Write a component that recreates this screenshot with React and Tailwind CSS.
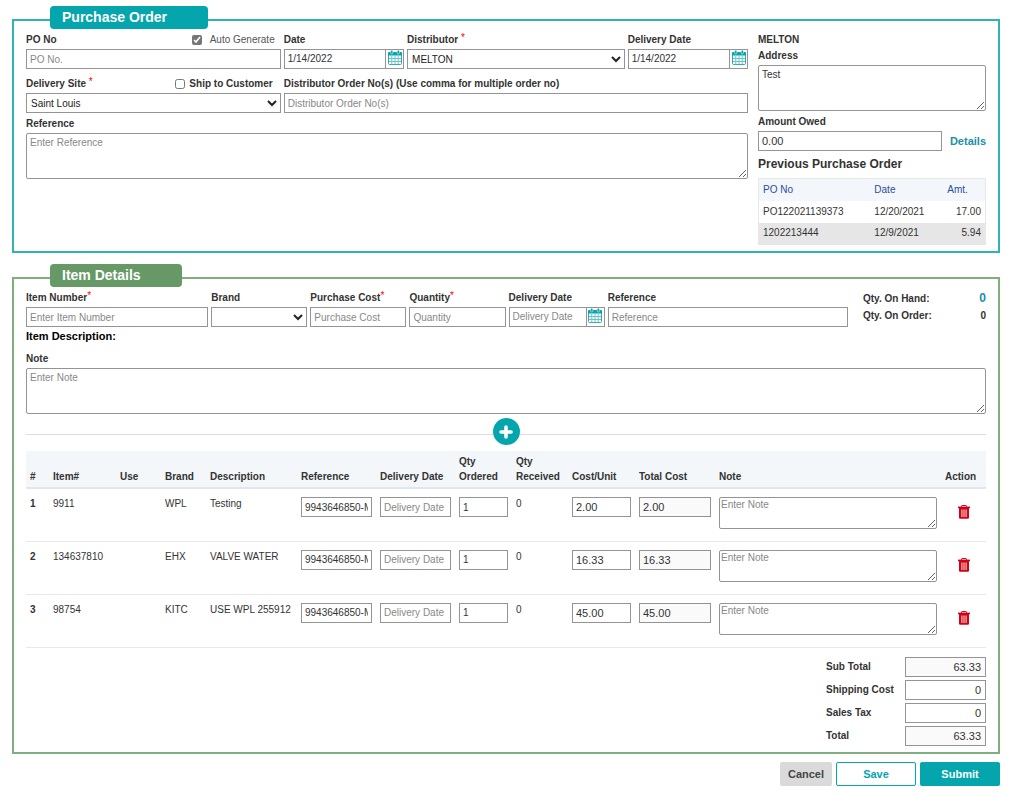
import { useState } from "react";

const previousOrders = [
    { po: "PO122021139373", date: "12/20/2021", amount: "17.00" },
    { po: "1202213444", date: "12/9/2021", amount: "5.94" },
];

const items = [
    { item: "9911", brand: "WPL", description: "Testing", cost: "2.00" },
    { item: "134637810", brand: "EHX", description: "VALVE WATER", cost: "16.33" },
    { item: "98754", brand: "KITC", description: "USE WPL 255912", cost: "45.00" },
];

const control =
    "block h-5 w-full min-w-0 border border-[#949494] px-[3px] text-[#333] placeholder:text-[#888] read-only:bg-[#fafafa]";
const selectControl = "block h-5 w-full min-w-0 border border-[#949494] text-[#222]";
const area =
    "block w-full rounded-xs border border-[#949494] text-[10px] leading-[14px] text-[#333] placeholder:text-[#888]";

function Star() {
    return <span className="align-top text-[10px] font-normal leading-3 text-[#ff0000]">*</span>;
}

function Label({ htmlFor, children }) {
    return (
        <label htmlFor={htmlFor} className="mb-px block h-4 whitespace-nowrap font-bold leading-4">
            {children}
        </label>
    );
}

function CalendarIcon() {
    return (
        <svg viewBox="0 0 14 15" className="h-[15px] w-3.5" aria-hidden="true">
            <rect x="0.5" y="2.5" width="13" height="12" rx="1" fill="#fff" stroke="#2aacb2" />
            <path d="M0 2.5Q0 2 1 2h12Q14 2 14 2.500V5.500H0z" fill="#04a5ac" />
            <path d="M3.800 5.500v9M7 5.500v9M10.200 5.500v9M1 8.500h12M1 11.500h12" stroke="#5cc0c5" strokeWidth="0.9" />
            <rect x="2.600" y="0.300" width="2.200" height="3.700" rx="1" fill="#04a5ac" stroke="#fff" strokeWidth="0.500" />
            <rect x="9.200" y="0.300" width="2.200" height="3.700" rx="1" fill="#04a5ac" stroke="#fff" strokeWidth="0.500" />
        </svg>
    );
}

function TrashIcon() {
    return (
        <svg viewBox="0 0 12 14" className="h-3.5 w-3" aria-hidden="true">
            <path d="M3.500 2V1.200Q3.500 0.500 4.200 0.500H7.800Q8.500 0.500 8.500 1.200V2" fill="none" stroke="#d0021b" />
            <path d="M0 1.600h12v1.600H0z" fill="#d0021b" />
            <path d="M1 3h10V12.500Q11 13.700 9.800 13.700H2.200Q1 13.700 1 12.500z" fill="#d0021b" />
            <path d="M3.900 4.500v7.500M6 4.500v7.500M8.100 4.500v7.500" stroke="#fbd3c0" strokeWidth="1.100" />
        </svg>
    );
}

function DateField({ id, label, value, placeholder }) {
    return (
        <div className="min-w-0">
            <Label htmlFor={id}>{label}</Label>
            <div className="flex h-5 border border-[#949494]">
                <input
                    id={id}
                    type="text"
                    defaultValue={value}
                    placeholder={placeholder}
                    className="min-w-0 flex-1 px-[3px] text-[#333] placeholder:text-[#888]"
                />
                <button
                    type="button"
                    aria-label="Open calendar"
                    className="flex w-[18px] justify-center border-l border-[#949494]"
                >
                    <CalendarIcon />
                </button>
            </div>
        </div>
    );
}

function PurchaseOrder() {
    return (
        <section className="border-2 border-[#2fb3b8] px-3 pb-1.5">
            <h2 className="-mt-[15px] ml-6 h-[23px] w-[158px] rounded bg-[#04a5ac] px-3 text-sm font-bold leading-[23px] text-white">
                Purchase Order
            </h2>
            <div className="mt-[3px] flex gap-2.5">
                <div className="min-w-0 flex-1">
                    <div className="grid grid-cols-[254fr_120fr_217fr_120fr] gap-x-[3px] gap-y-[7px]">
                        <div className="min-w-0">
                            <div className="flex justify-between pr-1.5">
                                <Label htmlFor="po-no">PO No</Label>
                                <label className="flex h-4 items-center gap-2 text-[#555]">
                                    <input type="checkbox" defaultChecked className="size-2.5 accent-[#767676]" />
                                    Auto Generate
                                </label>
                            </div>
                            <input id="po-no" type="text" placeholder="PO No." className={control} />
                        </div>
                        <DateField id="po-date" label="Date" value="1/14/2022" />
                        <div className="min-w-0">
                            <Label htmlFor="distributor">
                                Distributor <Star />
                            </Label>
                            <select id="distributor" className={selectControl}>
                                <option>MELTON</option>
                            </select>
                        </div>
                        <DateField id="po-delivery" label="Delivery Date" value="1/14/2022" />
                        <div className="min-w-0">
                            <div className="flex justify-between pr-2">
                                <Label htmlFor="site">
                                    Delivery Site <Star />
                                </Label>
                                <label className="flex h-4 items-center gap-1 font-bold">
                                    <input type="checkbox" className="size-2.5" />
                                    Ship to Customer
                                </label>
                            </div>
                            <select id="site" className={selectControl}>
                                <option>Saint Louis</option>
                            </select>
                        </div>
                        <div className="col-span-3 min-w-0">
                            <Label htmlFor="order-nos">
                                Distributor Order No(s) (Use comma for multiple order no)
                            </Label>
                            <input id="order-nos" type="text" placeholder="Distributor Order No(s)" className={control} />
                        </div>
                    </div>
                    <div className="mt-[3px]">
                        <Label htmlFor="po-reference">Reference</Label>
                        <textarea
                            id="po-reference"
                            placeholder="Enter Reference"
                            className={`${area} h-[46px] px-[3px] py-0.5`}
                        />
                    </div>
                </div>

                <div className="w-[228px] shrink-0">
                    <p className="font-bold leading-4">MELTON</p>
                    <Label htmlFor="address">Address</Label>
                    <textarea id="address" defaultValue="Test" className={`${area} h-[46px] px-[3px] py-0.5`} />
                    <div className="mt-[3px]">
                        <Label htmlFor="owed">Amount Owed</Label>
                        <div className="flex items-center gap-2">
                            <input id="owed" type="text" defaultValue="0.00" className={`${control} text-[11px]`} />
                            <a href="#details" className="text-[11px] font-bold text-[#1a8fa8]">
                                Details
                            </a>
                        </div>
                    </div>
                    <h3 className="my-1 text-xs font-bold leading-[19px]">Previous Purchase Order</h3>
                    <table className="w-full border border-[#e8e8e8] text-[10px]">
                        <thead>
                            <tr className="h-[22px] bg-[#f3f7fb] text-left text-[#2a4d9c]">
                                <th className="px-1 font-normal">PO No</th>
                                <th className="px-1 font-normal">Date</th>
                                <th className="px-1 font-normal">Amt.</th>
                            </tr>
                        </thead>
                        <tbody>
                            {previousOrders.map((order) => (
                                <tr key={order.po} className="h-[22px] even:bg-[#e6e6e6]">
                                    <td className="px-1">{order.po}</td>
                                    <td className="px-1">{order.date}</td>
                                    <td className="px-1 text-right">{order.amount}</td>
                                </tr>
                            ))}
                        </tbody>
                    </table>
                </div>
            </div>
        </section>
    );
}

function ItemsTable({ rows, onRemove }) {
    return (
        <table className="w-full table-fixed">
            <colgroup>
                <col className="w-[23px]" />
                <col className="w-[67px]" />
                <col className="w-[45px]" />
                <col className="w-[45px]" />
                <col className="w-[91px]" />
                <col className="w-[79px]" />
                <col className="w-[79px]" />
                <col className="w-[57px]" />
                <col className="w-[56px]" />
                <col className="w-[67px]" />
                <col className="w-20" />
                <col />
                <col className="w-[45px]" />
            </colgroup>
            <thead>
                <tr className="h-[37px] border-b-2 border-[#e1e5f0] bg-[#f3f7fa] text-left align-bottom leading-[15px] [&>th]:px-1 [&>th]:pb-[3px]">
                    <th>#</th>
                    <th>Item#</th>
                    <th>Use</th>
                    <th>Brand</th>
                    <th>Description</th>
                    <th>Reference</th>
                    <th className="whitespace-nowrap">Delivery Date</th>
                    <th>Qty Ordered</th>
                    <th>Qty Received</th>
                    <th>Cost/Unit</th>
                    <th>Total Cost</th>
                    <th>Note</th>
                    <th>Action</th>
                </tr>
            </thead>
            <tbody>
                {rows.map((row, index) => (
                    <tr
                        key={row.item}
                        className="h-[53px] border-b border-[#e6e9f2] align-top leading-[14px] [&>td]:px-1 [&>td]:pt-2"
                    >
                        <td className="font-bold">{index + 1}</td>
                        <td>{row.item}</td>
                        <td />
                        <td>{row.brand}</td>
                        <td className="whitespace-nowrap">{row.description}</td>
                        <td>
                            <input type="text" aria-label="Reference" defaultValue="9943646850-M" className={control} />
                        </td>
                        <td>
                            <input type="text" aria-label="Delivery Date" placeholder="Delivery Date" className={control} />
                        </td>
                        <td>
                            <input type="text" aria-label="Qty Ordered" defaultValue="1" className={control} />
                        </td>
                        <td>0</td>
                        <td>
                            <input
                                type="text"
                                aria-label="Cost/Unit"
                                defaultValue={row.cost}
                                className={`${control} text-[11px]`}
                            />
                        </td>
                        <td>
                            <input
                                type="text"
                                readOnly
                                aria-label="Total Cost"
                                value={row.cost}
                                className={`${control} text-[11px]`}
                            />
                        </td>
                        <td>
                            <textarea
                                aria-label="Note"
                                placeholder="Enter Note"
                                className={`${area} h-8 px-px`}
                            />
                        </td>
                        <td className="text-center">
                            <button type="button" aria-label="Delete item" className="mt-2" onClick={() => onRemove(row.item)}>
                                <TrashIcon />
                            </button>
                        </td>
                    </tr>
                ))}
            </tbody>
        </table>
    );
}

function TotalRow({ id, label, value, readOnly }) {
    return (
        <div className="flex items-center justify-between">
            <label htmlFor={id} className="font-bold">
                {label}
            </label>
            <input
                id={id}
                type="text"
                defaultValue={value}
                readOnly={readOnly}
                className="h-5 w-[81px] border border-[#949494] px-1 text-right text-[11px] text-[#333] read-only:bg-[#fafafa]"
            />
        </div>
    );
}

function ItemDetails() {
    const [rows, setRows] = useState(items);

    return (
        <section className="mt-6 border-2 border-[#7fae7f] px-3 pb-1.5">
            <h2 className="-mt-[15px] ml-6 h-[23px] w-[132px] rounded bg-[#669966] px-3 text-sm font-bold leading-[23px] text-white">
                Item Details
            </h2>
            <div className="mt-[3px] flex gap-[15px]">
                <div className="grid min-w-0 flex-1 grid-cols-[182fr_96fr_96fr_96fr_96fr_240fr] gap-x-[3px]">
                    <div className="min-w-0">
                        <Label htmlFor="item-number">
                            Item Number
                            <Star />
                        </Label>
                        <input id="item-number" type="text" placeholder="Enter Item Number" className={control} />
                    </div>
                    <div className="min-w-0">
                        <Label htmlFor="brand">Brand</Label>
                        <select id="brand" className={selectControl}>
                            <option />
                        </select>
                    </div>
                    <div className="min-w-0">
                        <Label htmlFor="cost">
                            Purchase Cost
                            <Star />
                        </Label>
                        <input id="cost" type="text" placeholder="Purchase Cost" className={control} />
                    </div>
                    <div className="min-w-0">
                        <Label htmlFor="quantity">
                            Quantity
                            <Star />
                        </Label>
                        <input id="quantity" type="text" placeholder="Quantity" className={control} />
                    </div>
                    <DateField id="item-delivery" label="Delivery Date" placeholder="Delivery Date" />
                    <div className="min-w-0">
                        <Label htmlFor="item-reference">Reference</Label>
                        <input id="item-reference" type="text" placeholder="Reference" className={control} />
                    </div>
                </div>
                <div className="w-[123px] shrink-0 font-bold leading-[17px]">
                    <div className="flex justify-between">
                        <span>Qty. On Hand:</span>
                        <a href="#on-hand" className="text-xs leading-[17px] text-[#1a8fa8]">
                            0
                        </a>
                    </div>
                    <div className="flex justify-between">
                        <span>Qty. On Order:</span>
                        <span>0</span>
                    </div>
                </div>
            </div>
            <p className="mt-px mb-[7px] text-[11px] font-bold leading-4 text-black">Item Description:</p>
            <Label htmlFor="item-note">Note</Label>
            <textarea id="item-note" placeholder="Enter Note" className={`${area} h-[46px] px-[3px] py-0.5`} />

            <div className="mt-1 mb-1.5 flex items-center">
                <div className="mt-1.5 flex-1 border-t border-[#ddd]" />
                <button
                    type="button"
                    aria-label="Add item"
                    className="flex size-[27px] items-center justify-center rounded-full bg-[#04a5ac]"
                >
                    <svg viewBox="0 0 14 14" className="size-3.5" aria-hidden="true">
                        <path d="M7 2v10M2 7h10" stroke="#fff" strokeWidth="3.600" strokeLinecap="round" />
                    </svg>
                </button>
                <div className="mt-1.5 flex-1 border-t border-[#ddd]" />
            </div>

            <ItemsTable rows={rows} onRemove={(item) => setRows(rows.filter((row) => row.item !== item))} />

            <div className="mt-[9px] ml-auto flex w-40 flex-col gap-[3px]">
                <TotalRow id="sub-total" label="Sub Total" value="63.33" readOnly />
                <TotalRow id="shipping" label="Shipping Cost" value="0" />
                <TotalRow id="tax" label="Sales Tax" value="0" />
                <TotalRow id="total" label="Total" value="63.33" readOnly />
            </div>
        </section>
    );
}

export default function App() {
    return (
        <main className="bg-white pt-[19px] pr-[17px] pb-2 pl-3 font-['Liberation_Sans',Arial,sans-serif] text-[10px] leading-4 text-[#333]">
            <PurchaseOrder />
            <ItemDetails />
            <div className="mt-2 flex justify-end gap-1 text-[11px] font-bold">
                <button type="button" className="h-6 w-[52px] rounded-xs bg-[#dadada] text-[#444]">
                    Cancel
                </button>
                <button type="button" className="h-6 w-20 rounded-xs border border-[#04a5ac] bg-white text-[#04a5ac]">
                    Save
                </button>
                <button type="button" className="h-6 w-20 rounded-xs bg-[#04a5ac] text-white">
                    Submit
                </button>
            </div>
        </main>
    );
}
